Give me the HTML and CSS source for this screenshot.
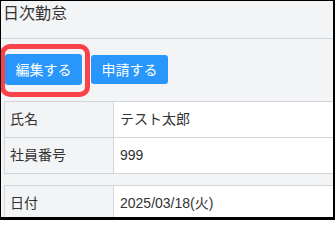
FILE: index.html
```html
<!DOCTYPE html>
<html lang="ja">
<head>
<meta charset="utf-8">
<link rel="stylesheet" href="styles.css">
</head>
<body>
<div class="frame">
  <div class="header">日次勤怠</div>
  <div class="actions">
    <button class="btn btn-edit">編集する</button>
    <button class="btn btn-apply">申請する</button>
  </div>
  <div class="grid">
    <div class="label">氏名</div><div class="value">テスト太郎</div>
    <div class="label">社員番号</div><div class="value">999</div>
  </div>
  <div class="grid grid-second">
    <div class="label">日付</div><div class="value">2025/03/18(火)</div>
  </div>
  <div class="highlight"></div>
</div>
</body>
</html>
```
FILE: styles.css
```css
* { box-sizing: border-box; }
html, body { margin: 0; padding: 0; }
body {
  font-family: "Liberation Sans", "Noto Sans CJK JP", sans-serif;
  color: #333;
}
.frame {
  position: relative;
  width: 335px;
  height: 220px;
  overflow: hidden;
  background: #f3f4f6;
  border-top: 1px solid #000;
  border-left: 1px solid #000;
  border-right: 2px solid #000;
  border-bottom: 3px solid #000;
}
.header {
  height: 38px;
  padding: 0 2px;
  font-size: 16px;
  line-height: 25px;
  color: #333;
  border-bottom: 1px solid #d1d5db;
}
.actions {
  display: flex;
  align-items: center;
  gap: 9px;
  padding: 15px 0 16px 4px;
}
.btn {
  width: 77px;
  margin: 0;
  padding: 0;
  border: none;
  border-radius: 3px;
  background: #2896fa;
  color: #fff;
  font-family: "Liberation Sans", "Noto Sans CJK JP", sans-serif;
  font-size: 14px;
  line-height: 20px;
}
.btn-edit { height: 31px; }
.btn-apply { height: 29px; }
.grid {
  display: grid;
  grid-template-columns: 109px 1fr;
  width: 340px;
  margin-left: 3px;
  border-top: 1px solid #d1d5db;
  border-left: 1px solid #d1d5db;
  font-size: 14px;
  line-height: 19px;
}
.grid-second { margin-top: 11px; }
.label, .value {
  padding: 8px 6px;
  border-right: 1px solid #d1d5db;
  border-bottom: 1px solid #d1d5db;
}
.label { background: #f3f4f6; padding-left: 5px; }
.value { background: #fff; }
.highlight {
  position: absolute;
  left: -1px;
  top: 43px;
  width: 90px;
  height: 53px;
  border: 5px solid #fa4248;
  border-radius: 10px;
}
```
